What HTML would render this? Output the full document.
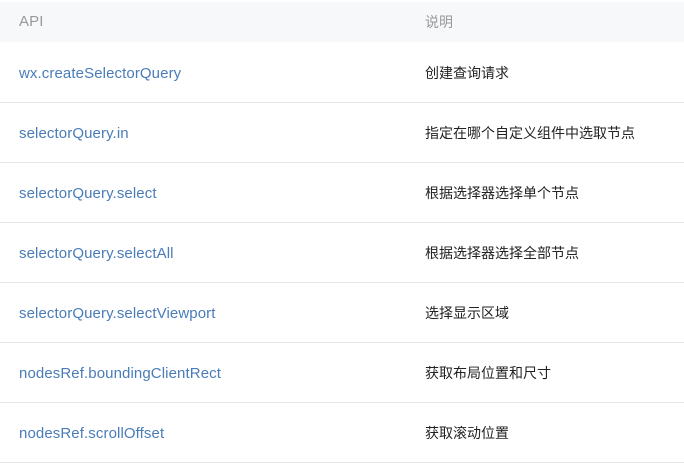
<!DOCTYPE html>
<html><head><meta charset="utf-8"><style>
body{margin:0;width:684px;height:468px;background:#fff;overflow:hidden;font-family:"Liberation Sans","Noto Sans CJK SC",sans-serif;font-size:15px}
.h{position:absolute;left:0;top:2px;width:684px;height:40px;background:#f7f8fa;color:#999}
.r{position:absolute;left:0;width:684px;height:59px;border-bottom:1px solid #e5e5e5}
.a{position:absolute;left:19px;top:1px;line-height:60px;color:#4a7cb8;letter-spacing:0.1px}
.b{position:absolute;left:425px;top:0;line-height:60px;color:#222;font-size:14px}
.h .a,.h .b{line-height:40px;color:#999;top:0}
</style></head><body>
<div class="h"><span class="a" style="color:#999">API</span><span class="b">说明</span></div>
<div class="r" style="top:43px"><span class="a">wx.createSelectorQuery</span><span class="b">创建查询请求</span></div>
<div class="r" style="top:103px"><span class="a">selectorQuery.in</span><span class="b">指定在哪个自定义组件中选取节点</span></div>
<div class="r" style="top:163px"><span class="a">selectorQuery.select</span><span class="b">根据选择器选择单个节点</span></div>
<div class="r" style="top:223px"><span class="a">selectorQuery.selectAll</span><span class="b">根据选择器选择全部节点</span></div>
<div class="r" style="top:283px"><span class="a">selectorQuery.selectViewport</span><span class="b">选择显示区域</span></div>
<div class="r" style="top:343px"><span class="a">nodesRef.boundingClientRect</span><span class="b">获取布局位置和尺寸</span></div>
<div class="r" style="top:403px"><span class="a">nodesRef.scrollOffset</span><span class="b">获取滚动位置</span></div>
</body></html>
